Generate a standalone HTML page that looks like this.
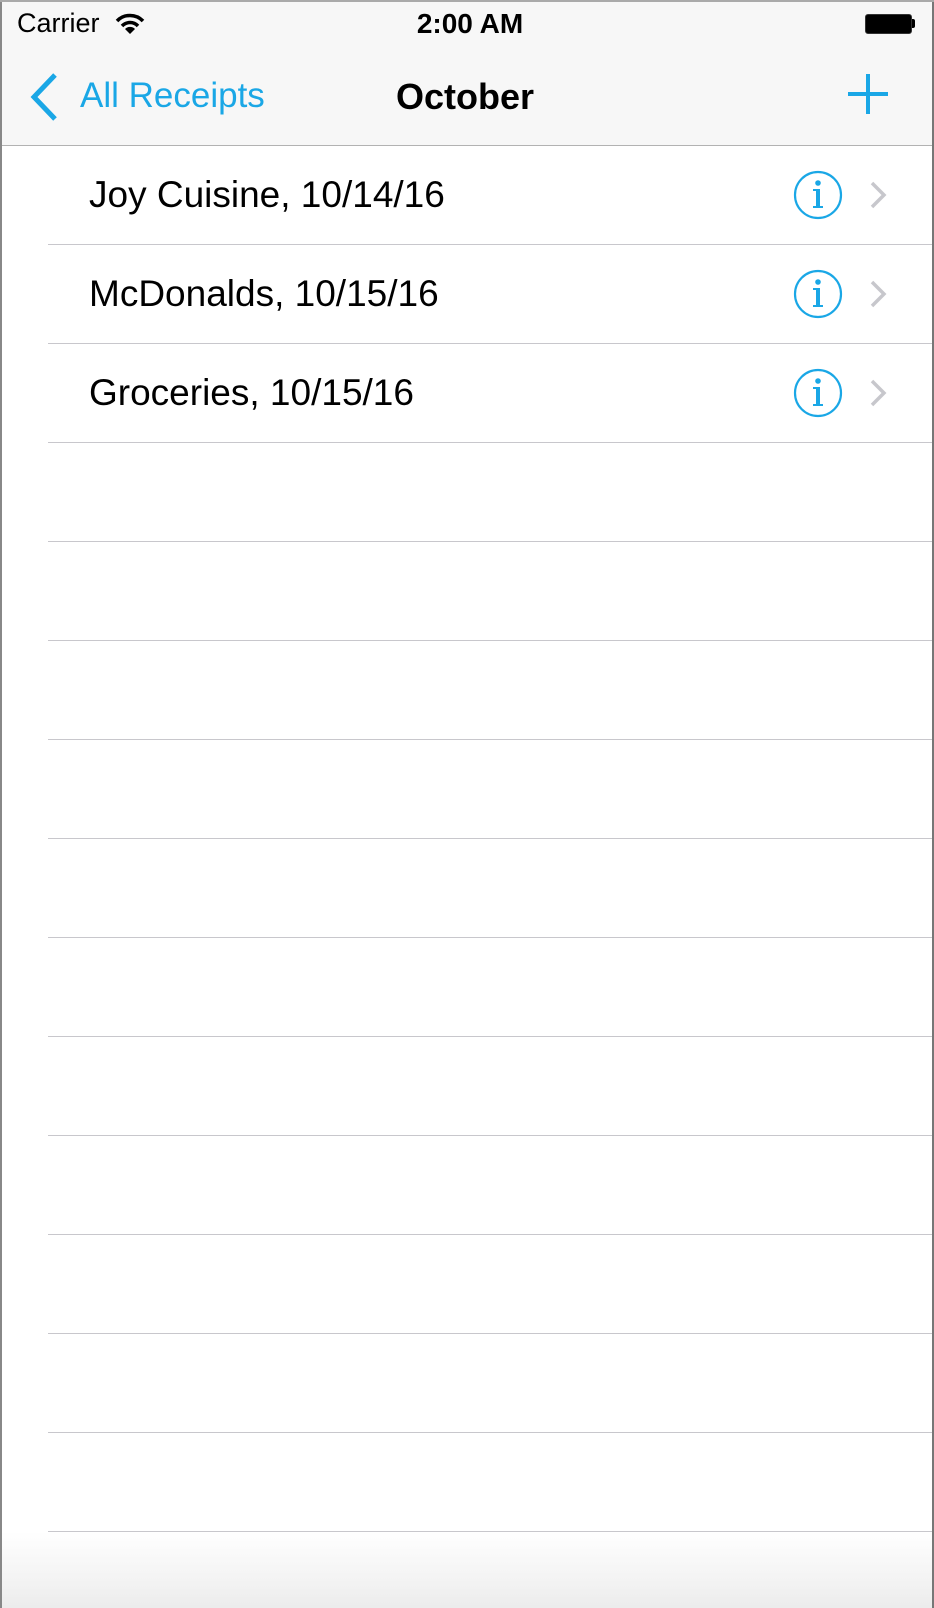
<!DOCTYPE html>
<html><head><meta charset="utf-8"><style>
html,body{margin:0;padding:0;}
body{width:934px;height:1608px;position:relative;overflow:hidden;background:#fff;font-family:"Liberation Sans",sans-serif;}
.bar{position:absolute;left:0;top:0;width:934px;height:145px;background:#f7f7f7;border-bottom:1px solid #b2b2b2;}
.t{position:absolute;white-space:nowrap;}
.sep{position:absolute;left:48px;right:0;height:1px;background:#c8c7cc;}
.row{position:absolute;left:89px;font-size:37px;color:#000;}
.foot{position:absolute;left:0;top:1532px;width:934px;height:76px;background:linear-gradient(#fff,#ececec);}
.edgeL{position:absolute;left:0;top:0;width:2px;height:1608px;background:#888;}
.edgeR{position:absolute;right:0;top:0;width:2px;height:1608px;background:#777;}
.edgeT{position:absolute;left:0;top:0;width:934px;height:2px;background:#aaa;}
</style></head><body>
<div class="bar"></div>
<div class="t" style="left:17px;top:8px;font-size:27px;color:#000;">Carrier</div>
<svg style="position:absolute;left:115px;top:13px" width="30" height="22" viewBox="0 0 30 22"><path d="M2 8 A18 18 0 0 1 28 8" stroke="#000" stroke-width="3.5" fill="none"/><path d="M7 13 A11 11 0 0 1 23 13" stroke="#000" stroke-width="3.5" fill="none"/><path d="M15 21 L10 16 A7 7 0 0 1 20 16 Z" fill="#000"/></svg>
<div class="t" style="left:0;width:940px;text-align:center;top:8px;font-size:28px;font-weight:bold;color:#000;">2:00 AM</div>
<div style="position:absolute;left:865px;top:14px;width:45px;height:18px;border:1px solid #333;border-radius:3px;background:#000;"></div>
<div style="position:absolute;left:912px;top:19px;width:3px;height:9px;background:#000;border-radius:0 2px 2px 0"></div>
<svg style="position:absolute;left:28px;top:72px" width="32" height="50" viewBox="0 0 32 50"><path d="M27 3 L6 25 L27 47" stroke="#1aa7e6" stroke-width="5" fill="none"/></svg>
<div class="t" style="left:80px;top:76px;font-size:35px;color:#1aa7e6;font-weight:300;">All Receipts</div>
<div class="t" style="left:396px;top:76px;font-size:36px;font-weight:bold;color:#000;">October</div>
<div style="position:absolute;left:848px;top:92px;width:40px;height:4px;background:#1aa7e6"></div>
<div style="position:absolute;left:866px;top:74px;width:4px;height:40px;background:#1aa7e6"></div>

<div class="row t" style="top:174px">Joy Cuisine, 10/14/16</div>
<div class="row t" style="top:273px">McDonalds, 10/15/16</div>
<div class="row t" style="top:372px">Groceries, 10/15/16</div>

<svg style="position:absolute;left:792px;top:169px" width="100" height="300" viewBox="0 0 100 300">
<g id="r">
<circle cx="26" cy="26" r="23" stroke="#1aa7e6" stroke-width="2.2" fill="none"/>
<circle cx="26" cy="14" r="2.8" fill="#1aa7e6"/>
<path d="M21 20 H28 V37 H31 V39 H21 V37 H24 V22 H21 Z" fill="#1aa7e6"/>
<path d="M80 14 L92 26 L80 38" stroke="#c7c7cc" stroke-width="3.5" fill="none"/>
</g>
<use href="#r" y="99"/><use href="#r" y="198"/>
</svg>

<div class="sep" style="top:244px"></div><div class="sep" style="top:343px"></div><div class="sep" style="top:442px"></div><div class="sep" style="top:541px"></div><div class="sep" style="top:640px"></div><div class="sep" style="top:739px"></div><div class="sep" style="top:838px"></div><div class="sep" style="top:937px"></div><div class="sep" style="top:1036px"></div><div class="sep" style="top:1135px"></div><div class="sep" style="top:1234px"></div><div class="sep" style="top:1333px"></div><div class="sep" style="top:1432px"></div>
<div class="foot"></div>
<div class="sep" style="top:1531px"></div>
<div class="edgeL"></div><div class="edgeR"></div><div class="edgeT"></div>
</body></html>
